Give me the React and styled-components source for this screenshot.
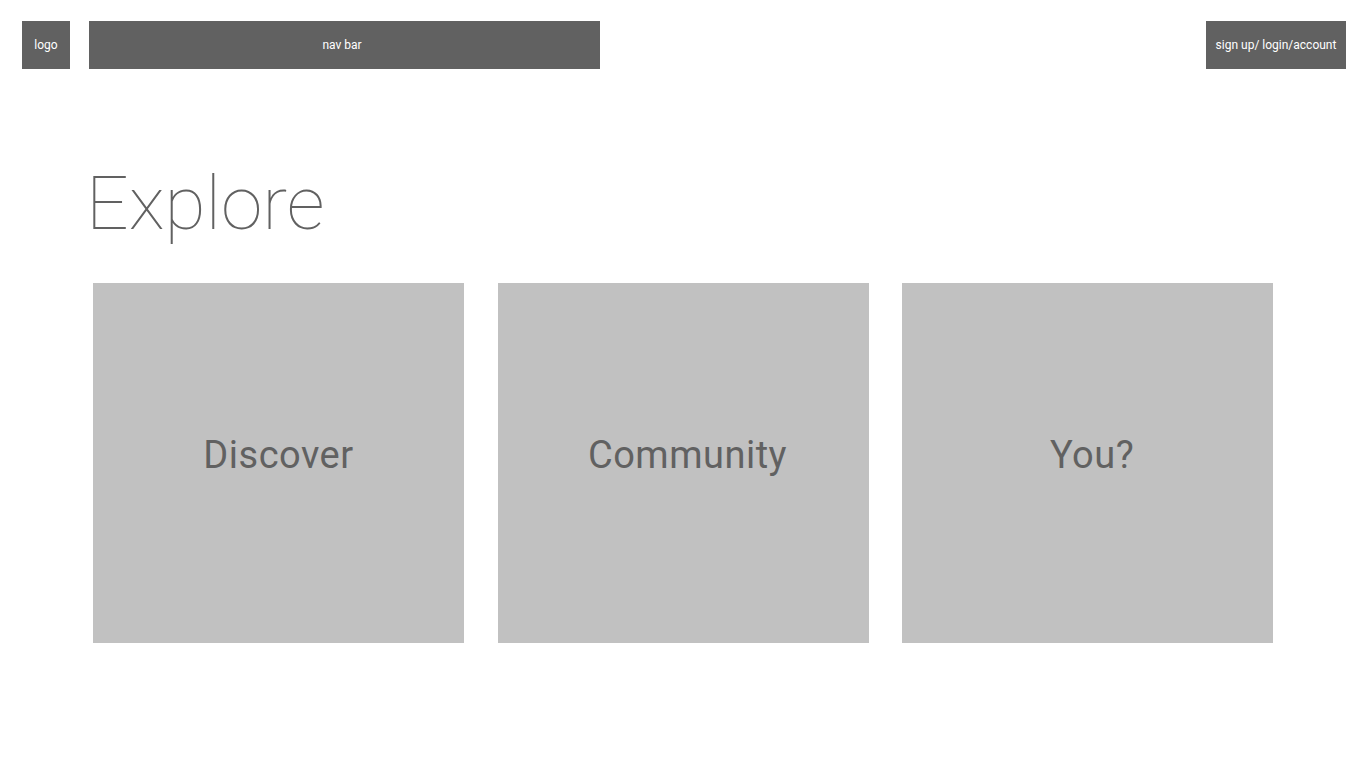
import React from 'react';
import styled, { createGlobalStyle } from 'styled-components';

const GlobalStyle = createGlobalStyle`
  body {
    margin: 0;
    background: #ffffff;
    font-family: Roboto, "Liberation Sans", sans-serif;
  }
`;

const Page = styled.div`
  width: 1366px;
  height: 768px;
  overflow: hidden;
`;

const Header = styled.header`
  display: flex;
  align-items: center;
  padding: 21px 20px 0 22px;
`;

const Block = styled.div`
  height: 48px;
  width: ${p => p.$w}px;
  margin-left: ${p => p.$ml || 0}px;
  padding-right: ${p => p.$pr || 0}px;
  box-sizing: border-box;
  background: #616161;
  color: #ffffff;
  font-size: 12px;
  display: flex;
  align-items: center;
  justify-content: center;
`;

const Spacer = styled.div`
  flex: 1;
`;

const Main = styled.main`
  padding: 0 93px 0 86px;
`;

const Title = styled.h1`
  margin: 84px 0 0;
  font-weight: 100;
  font-size: 75px;
  line-height: 100px;
  color: #616161;
`;

const Cards = styled.div`
  display: grid;
  grid-template-columns: repeat(3, 371px);
  column-gap: 33.5px;
  margin: 30px 0 0 7px;
`;

const Card = styled.div`
  height: 360px;
  background: #c1c1c1;
  display: flex;
  align-items: center;
  justify-content: center;
  padding: 0 0 16px ${p => p.$dx || 0}px;
  box-sizing: border-box;
  color: #616161;
  font-size: 38px;
  letter-spacing: 0.5px;
`;

const cards = [
  { label: 'Discover', dx: 0 },
  { label: 'Community', dx: 9 },
  { label: 'You?', dx: 9 },
];

export default function App() {
  return (
    <Page>
      <GlobalStyle />
      <Header>
        <Block $w={48}>logo</Block>
        <Block $w={511} $ml={19} $pr={5}>nav bar</Block>
        <Spacer />
        <Block $w={140}>sign up/ login/account</Block>
      </Header>
      <Main>
        <Title>Explore</Title>
        <Cards>
          {cards.map(c => (
            <Card key={c.label} $dx={c.dx}>{c.label}</Card>
          ))}
        </Cards>
      </Main>
    </Page>
  );
}
